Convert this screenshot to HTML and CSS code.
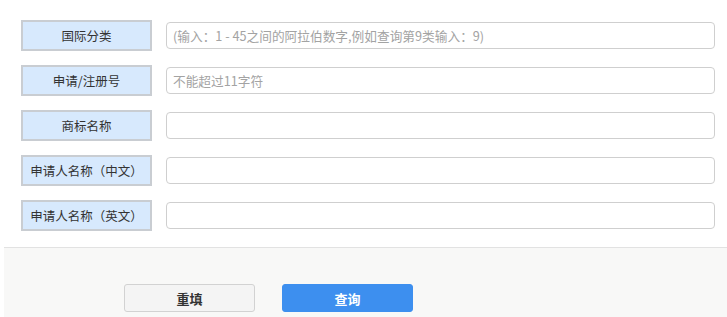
FILE: index.html
```html
<!DOCTYPE html>
<html lang="zh-CN">
  <head>
    <meta charset="UTF-8" />
    <meta name="viewport" content="width=device-width, initial-scale=1.0" />
    <title>商标查询</title>
    <link rel="stylesheet" href="styles.css">
  </head>
  <body>
    <form class="search-form">
      <div class="form-rows">
        <div class="form-row">
          <label class="form-label" for="intCls">国际分类</label>
          <input class="form-input" id="intCls" type="text" placeholder="(输入：1 - 45之间的阿拉伯数字,例如查询第9类输入：9)">
        </div>
        <div class="form-row">
          <label class="form-label" for="regNo">申请/注册号</label>
          <input class="form-input" id="regNo" type="text" placeholder="不能超过11字符">
        </div>
        <div class="form-row">
          <label class="form-label" for="tmName">商标名称</label>
          <input class="form-input" id="tmName" type="text">
        </div>
        <div class="form-row">
          <label class="form-label" for="applCn">申请人名称（中文）</label>
          <input class="form-input" id="applCn" type="text">
        </div>
        <div class="form-row">
          <label class="form-label" for="applEn">申请人名称（英文）</label>
          <input class="form-input" id="applEn" type="text">
        </div>
      </div>

      <div class="form-footer">
        <button type="reset" class="btn btn-reset">重填</button>
        <button type="button" class="btn btn-search">查询</button>
      </div>
    </form>
  </body>
</html>
```

FILE: styles.css
```css
* {
  box-sizing: border-box;
}

body {
  margin: 0;
  font-family: "Noto Sans CJK SC", "Noto Sans", sans-serif;
  background: #ffffff;
  color: #333333;
}

.form-rows {
  display: flex;
  flex-direction: column;
  gap: 14px;
  padding: 20px 0 16px 21px;
}

.form-row {
  display: flex;
  align-items: center;
  gap: 14px;
}

.form-label {
  width: 131px;
  height: 31px;
  display: flex;
  align-items: center;
  justify-content: center;
  background: #d7e9fd;
  border: 2px solid #c9cdd2;
  font-size: 12.5px;
  color: #333333;
  white-space: nowrap;
}

.form-input {
  width: 549px;
  height: 27px;
  padding: 0 6px;
  border: 1px solid #cfcfcf;
  border-radius: 4px;
  font-family: inherit;
  font-size: 12.7px;
  color: #333333;
  outline: none;
}

.form-input::placeholder {
  color: #a3a3a3;
}

.form-footer {
  display: flex;
  gap: 27px;
  margin-left: 4px;
  padding: 36px 0 6px 120px;
  height: 70px;
  background: #f8f8f7;
  border-top: 1px solid #e2e2e2;
}

.btn {
  width: 131px;
  height: 28px;
  border-radius: 3px;
  font-family: inherit;
  font-size: 13px;
  font-weight: 700;
  cursor: pointer;
}

.btn-reset {
  background: #f4f4f4;
  border: 1px solid #d2d2d2;
  color: #333333;
}

.btn-search {
  background: #3d8fef;
  border: 1px solid #3d8fef;
  color: #ffffff;
}
```
